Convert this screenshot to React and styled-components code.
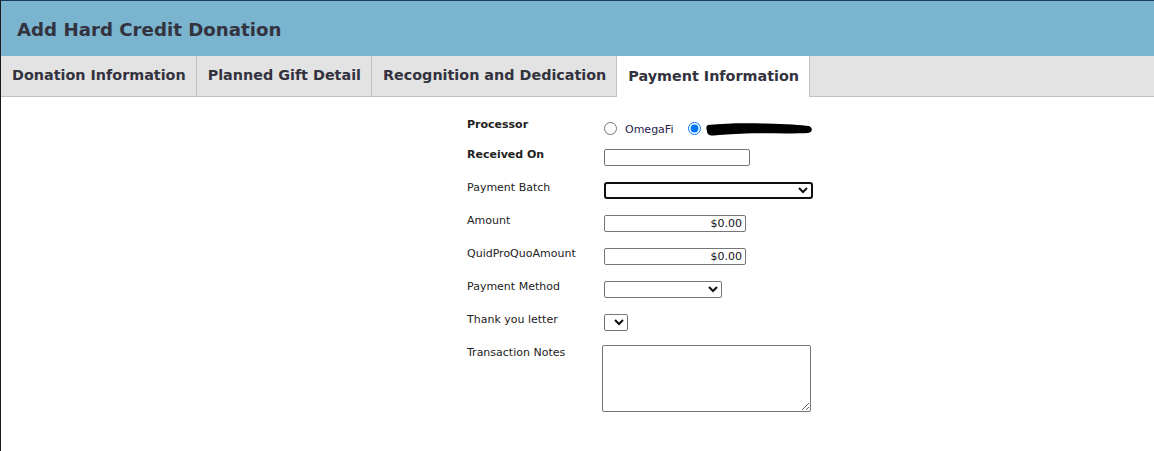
import React from "react";
import styled, { createGlobalStyle } from "styled-components";

const GlobalStyle = createGlobalStyle`
  html, body {
    margin: 0;
    padding: 0;
    background: #fff;
  }
  body {
    font-family: Verdana, "DejaVu Sans", sans-serif;
    color: #222;
  }
`;

const tabs = [
  "Donation Information",
  "Planned Gift Detail",
  "Recognition and Dedication",
  "Payment Information",
];

const App = () => {
  return (
    <Page>
      <GlobalStyle />
      <Header>
        <Title>Add Hard Credit Donation</Title>
      </Header>
      <TabBar>
        {tabs.map((t, i) => (
          <Tab key={t} $active={i === tabs.length - 1}>
            {t}
          </Tab>
        ))}
      </TabBar>
      <Form>
        <Row $h={30}>
          <Label $bold>Processor</Label>
          <RadioGroup>
            <Radio type="radio" name="proc" />
            <RadioText>OmegaFi</RadioText>
            <Radio type="radio" name="proc" defaultChecked $gap />
            <Redacted width="108" height="15" viewBox="0 0 108 15">
              <path
                d="M2 3 C20 1 40 1 60 1.5 C80 2 96 3 103 4 C107 6 107 10 102 11 C85 12 60 11 40 11.5 C25 12 14 13 8 13.5 C3 14 1 12 1 9 C0 6 0 4 2 3 Z"
                fill="#000"
              />
            </Redacted>
          </RadioGroup>
        </Row>
        <Row>
          <Label $bold>Received On</Label>
          <TextInput type="text" $w={146} />
        </Row>
        <Row>
          <Label>Payment Batch</Label>
          <Select $w={209} $focus>
            <option></option>
          </Select>
        </Row>
        <Row>
          <Label>Amount</Label>
          <TextInput type="text" $w={142} $right defaultValue="$0.00" />
        </Row>
        <Row>
          <Label>QuidProQuoAmount</Label>
          <TextInput type="text" $w={142} $right defaultValue="$0.00" />
        </Row>
        <Row>
          <Label>Payment Method</Label>
          <Select $w={118}>
            <option></option>
          </Select>
        </Row>
        <Row>
          <Label>Thank you letter</Label>
          <Select $w={24}>
            <option></option>
          </Select>
        </Row>
        <Row $h={70}>
          <Label>Transaction Notes</Label>
          <Notes />
        </Row>
      </Form>
    </Page>
  );
};

const Page = styled.div`
  min-height: 100vh;
  box-sizing: border-box;
  border-top: 1px solid #1c3957;
  border-left: 1px solid #1a1a1a;
`;

const Header = styled.div`
  height: 55px;
  box-sizing: border-box;
  padding: 1px 0 0 16px;
  background: #7ab4cf;
  display: flex;
  align-items: center;
`;

const Title = styled.h1`
  margin: 0;
  font-size: 18.2px;
  font-weight: bold;
  color: #333340;
`;

const TabBar = styled.div`
  display: flex;
  height: 40px;
  background: #e3e3e3;
  border-bottom: 1px solid #c2c2c2;
`;

const Tab = styled.div`
  display: flex;
  align-items: center;
  box-sizing: border-box;
  padding: 0 10px 2px 11px;
  font-size: 14.35px;
  font-weight: bold;
  color: #333340;
  border-right: 1px solid #c2c2c2;
  background: ${(p) => (p.$active ? "#fff" : "transparent")};
  height: ${(p) => (p.$active ? "41px" : "40px")};
`;

const Form = styled.div`
  padding: 20px 0 0 466px;
`;

const Row = styled.div`
  display: grid;
  grid-template-columns: 137px auto;
  align-items: start;
  height: ${(p) => p.$h || 33}px;
`;

const Label = styled.div`
  padding-top: 1px;
  font-size: 11px;
  line-height: 13px;
  font-weight: ${(p) => (p.$bold ? "bold" : "normal")};
  color: #222;
`;

const RadioGroup = styled.div`
  display: flex;
  align-items: center;
  margin-top: 2px;
`;

const Radio = styled.input`
  width: 13px;
  height: 13px;
  margin: 0 0 0 ${(p) => (p.$gap ? "15px" : "0")};
`;

const RadioText = styled.span`
  font-size: 11px;
  color: #24224a;
  margin-left: 8px;
  margin-top: 3px;
`;

const Redacted = styled.svg`
  margin-left: 5px;
  margin-top: 3px;
`;

const TextInput = styled.input`
  box-sizing: border-box;
  width: ${(p) => p.$w}px;
  height: 17px;
  margin-top: 2px;
  padding: 0 3px;
  border: 1px solid #767676;
  border-radius: 2px;
  font-family: Verdana, "DejaVu Sans", sans-serif;
  font-size: 11px;
  color: #111;
  text-align: ${(p) => (p.$right ? "right" : "left")};
`;

const Select = styled.select`
  box-sizing: border-box;
  width: ${(p) => p.$w}px;
  height: 17px;
  margin-top: 2px;
  font-family: Verdana, "DejaVu Sans", sans-serif;
  font-size: 11px;
  border: ${(p) => (p.$focus ? "2px solid #101010" : "1px solid #767676")};
  border-radius: ${(p) => (p.$focus ? "3px" : "2px")};
  background: #fff;
  color: #111;
`;

const Notes = styled.textarea`
  box-sizing: border-box;
  width: 209px;
  height: 67px;
  margin: 0 0 0 -2px;
  border: 1px solid #767676;
  border-radius: 2px;
`;

export default App;
